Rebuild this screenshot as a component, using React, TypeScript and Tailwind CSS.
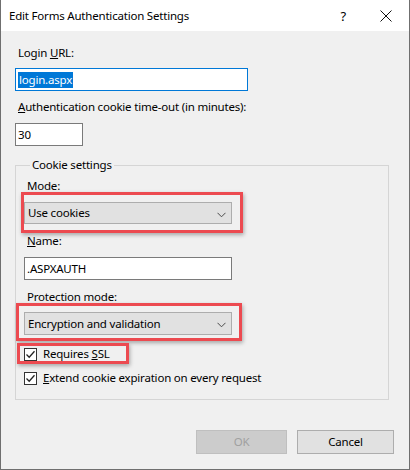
import React from "react";

const font = { fontFamily: '"Noto Sans", "Segoe UI", sans-serif' };

function Chevron() {
  return (
    <svg width="9" height="6" viewBox="0 0 9 6" className="absolute right-[5px] top-[9px]">
      <path d="M0.5 0.8 L4.5 4.8 L8.5 0.8" fill="none" stroke="#4a4a4a" strokeWidth="1" />
    </svg>
  );
}

function Check() {
  return (
    <div className="w-[13px] h-[13px] border border-[#333333] bg-white flex items-center justify-center">
      <svg width="11" height="11" viewBox="0 0 11 11">
        <path d="M1.5 5.5 L4.2 8.2 L9.5 2.2" fill="none" stroke="#222222" strokeWidth="1.3" />
      </svg>
    </div>
  );
}

export default function App() {
  return (
    <div
      className="relative w-[410px] h-[470px] bg-[#f0f0f0] border-x border-b border-[#6f6f6f] flex flex-col text-[11.5px] tracking-[-0.2px] leading-[16px] text-black"
      style={font}
    >
      {/* Title bar */}
      <div className="h-[31px] bg-white flex items-center pl-[8px] shrink-0">
        <span>Edit Forms Authentication Settings</span>
        <span className="ml-auto mr-[34px] text-[13px]">?</span>
        <svg width="12" height="12" viewBox="0 0 12 12" className="mr-[17px]">
          <path d="M0.5 0.5 L11.5 11.5 M11.5 0.5 L0.5 11.5" stroke="#111" strokeWidth="1" />
        </svg>
      </div>

      {/* Body */}
      <div className="flex-1 flex flex-col px-[14px]">
        <div className="mt-[14px] pl-[3px]">
          Login <span className="underline">U</span>RL:
        </div>
        <div className="mt-[7px] w-[233px] h-[23px] bg-white border border-[#0078d7] flex items-center pl-[2px]">
          <span className="bg-[#0078d7] text-white leading-[16px] px-[1px]">login.aspx</span>
        </div>
        <div className="mt-[8px] pl-[3px]">
          <span className="underline">A</span>uthentication cookie time-out (in minutes):
        </div>
        <div className="mt-[8px] w-[68px] h-[23px] bg-white border border-[#7a7a7a] flex items-center pl-[2px]">
          30
        </div>

        <fieldset className="mt-[11px] w-[374px] border border-[#d5d5d5] pl-[8px] pb-[13px]">
          <legend className="ml-[6px] px-[2px]">Cookie settings</legend>
          <div className="mt-[5px] pl-[3px]">Mode:</div>
          <div className="relative mt-[8px] w-[208px] h-[22px] bg-[#e1e1e1] border border-[#adadad] flex items-center pl-[3px]">
            Use cookies
            <Chevron />
          </div>
          <div className="mt-[9px] pl-[3px]">
            <span className="underline">N</span>ame:
          </div>
          <div className="mt-[8px] w-[208px] h-[23px] bg-white border border-[#7a7a7a] flex items-center pl-[2px]">
            .ASPXAUTH
          </div>
          <div className="mt-[9px] pl-[3px]">Protection mode:</div>
          <div className="relative mt-[7px] w-[208px] h-[23px] bg-[#e1e1e1] border border-[#adadad] flex items-center pl-[3px]">
            Encryption and validation
            <Chevron />
          </div>
          <div className="mt-[11px] flex items-center gap-[6px]">
            <Check />
            <span>
              Requires <span className="underline">S</span>SL
            </span>
          </div>
          <div className="mt-[8px] flex items-center gap-[6px]">
            <Check />
            <span>
              <span className="underline">E</span>xtend cookie expiration on every request
            </span>
          </div>
        </fieldset>

        <div className="mt-auto pb-[15px] flex justify-end gap-[10px] pr-[1px]">
          <div className="w-[91px] h-[24px] bg-[#cccccc] border border-[#bfbfbf] text-[#a0a0a0] flex items-center justify-center">
            OK
          </div>
          <div className="w-[97px] h-[24px] bg-[#e1e1e1] border border-[#adadad] flex items-center justify-center">
            Cancel
          </div>
        </div>
      </div>

      {/* Red highlight overlays */}
      <div className="absolute left-[20px] top-[192px] w-[222px] h-[41px] border-[3px] border-[#ec4a50] shadow-[1px_2px_4px_rgba(0,0,0,0.3)]" />
      <div className="absolute left-[15px] top-[303px] w-[226px] h-[38px] border-[3px] border-[#ec4a50] shadow-[1px_2px_4px_rgba(0,0,0,0.3)]" />
      <div className="absolute left-[16px] top-[343px] w-[112px] h-[21px] border-[3px] border-[#ec4a50] shadow-[1px_2px_4px_rgba(0,0,0,0.3)]" />
    </div>
  );
}
